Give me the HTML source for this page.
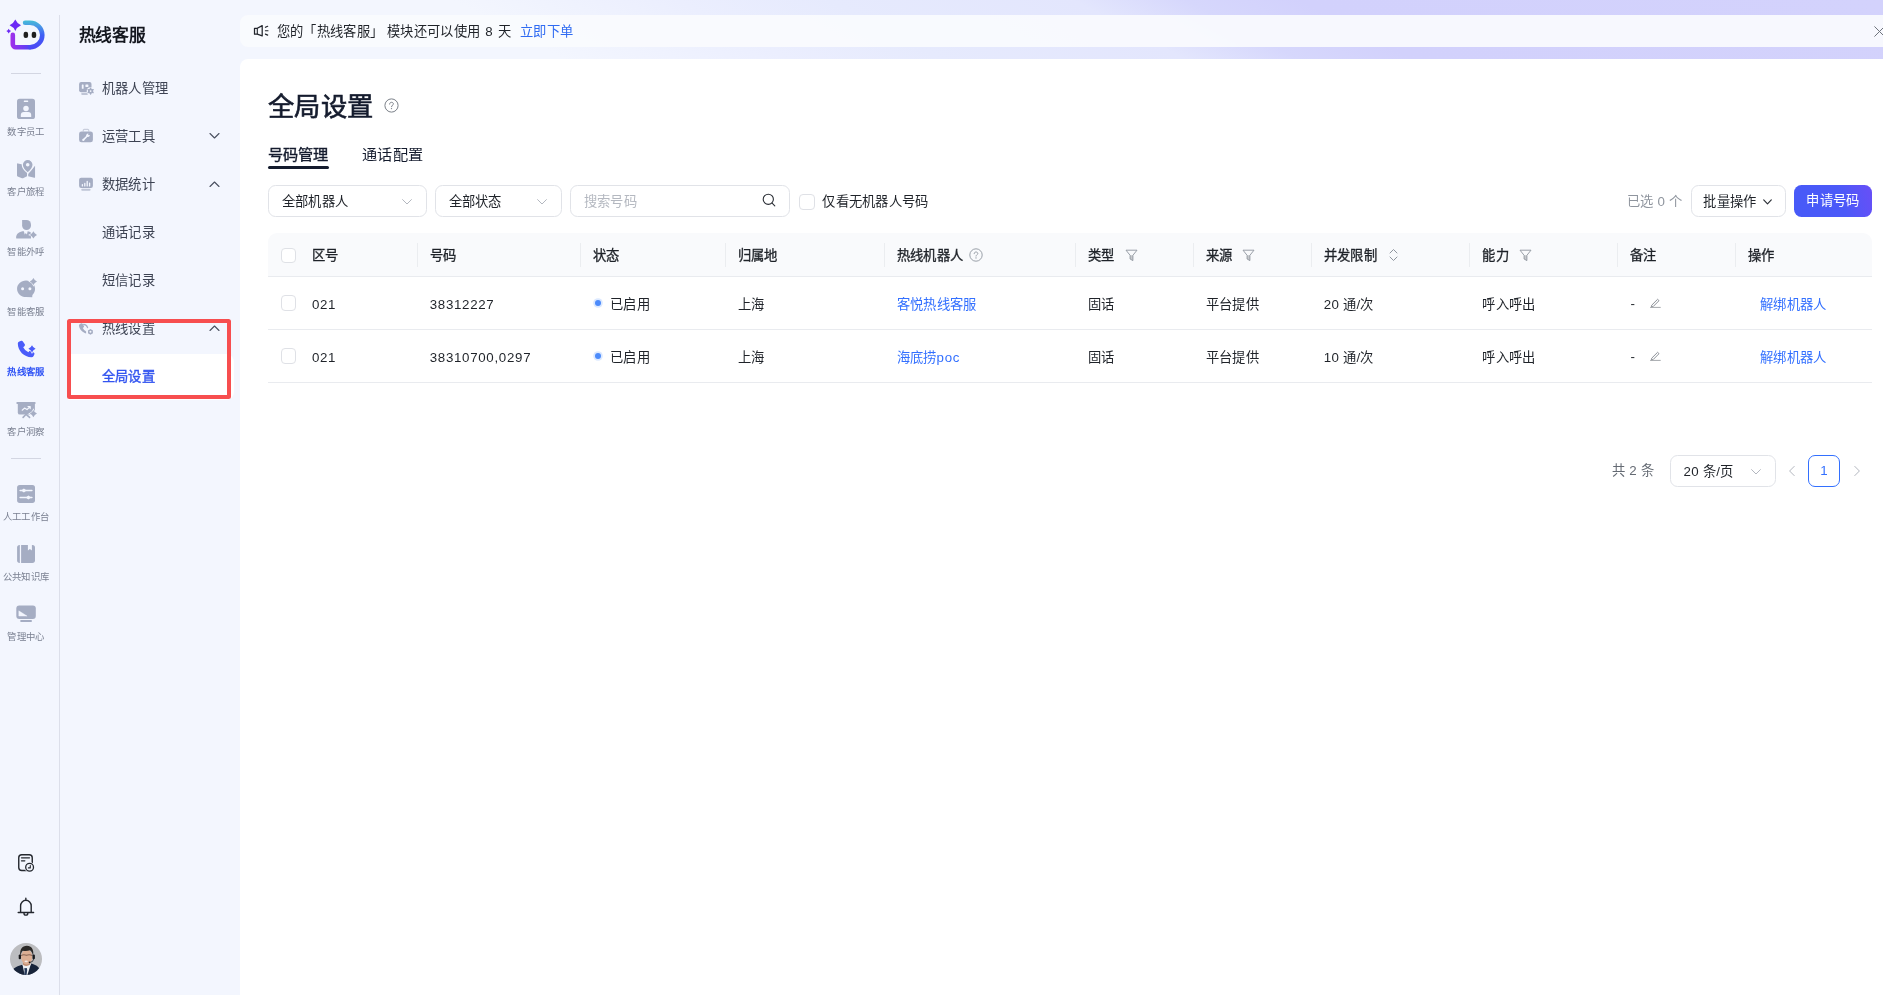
<!DOCTYPE html>
<html lang="zh-CN">
<head>
<meta charset="utf-8">
<title>全局设置</title>
<style>
*{box-sizing:border-box;margin:0;padding:0}
html,body{width:1883px;height:995px;overflow:hidden}
body{font-family:"Liberation Sans",sans-serif;font-size:13.3px;letter-spacing:0.3px;color:#1f2329;position:relative;
  background:linear-gradient(to top right,#f3f6fe 0%,#f3f6fe 62%,#ebeefe 68%,#e6eafd 72%,#e3e6fd 78.5%,#d6d7fc 81.5%,#d2d1fc 84.5%,#d3d2fc 100%);}
.abs{position:absolute}
#root{position:absolute;left:0;top:0;width:1883px;height:995px;overflow:hidden;will-change:transform}
/* left rail */
#rail{position:absolute;left:0;top:0;width:60px;height:995px;background:#f3f6fe}
#rail .vline{position:absolute;left:59px;top:15px;width:1px;height:980px;background:#dcdfea}
#rail .hr{position:absolute;left:11px;width:30px;height:1px;background:#d3d6e2}
.rl{position:absolute;left:-14px;width:80px;height:10px;font-size:9.35px;letter-spacing:0.37px;line-height:10px;color:#7a8091;text-align:center;white-space:nowrap}
.rl.on{color:#3054f5;font-weight:bold}
/* side menu */
#side{position:absolute;left:60px;top:0;width:180px;height:995px;background:#f3f6fe}
#side h1{position:absolute;left:18.5px;top:24px;font-size:16.8px;letter-spacing:-0.2px;line-height:24px;font-weight:bold;color:#14171f;white-space:nowrap}
.mi{position:absolute;left:8px;width:166px;height:45.6px;line-height:45.6px;font-size:13.3px;color:#3d4353;white-space:nowrap}
.mi .t{position:absolute;left:33.8px;top:0}
.mi svg.ch{position:absolute;left:141px;top:18.5px;width:11px;height:8px}
.mi.on{background:#fff;border-radius:0 8px 8px 0;color:#3355f0;-webkit-text-stroke:0.4px #3355f0}
#redbox{position:absolute;left:67px;top:319px;width:164.3px;height:80.2px;border:4px solid #f74e4f;border-radius:2.5px}
/* top banner */
#banner{position:absolute;left:240px;top:15px;width:1660px;height:32px;background:rgba(250,251,254,0.92);border-radius:8px 0 0 8px;font-size:13.3px;line-height:32px;color:#1f2329;white-space:nowrap}
#banner .txt{position:absolute;left:36.8px;top:1px}
#banner a{color:#2f6bf2;text-decoration:none;margin-left:9px}
/* card */
#card{position:absolute;left:240px;top:59px;width:1660px;height:940px;background:#fff;border-radius:8px 0 0 0}
#title{position:absolute;left:28px;top:29px;font-size:26.3px;letter-spacing:0.25px;line-height:38px;font-weight:normal;-webkit-text-stroke:0.65px #141b2d;color:#141b2d;white-space:nowrap}
.tab{position:absolute;top:84px;font-size:15.2px;letter-spacing:0.2px;line-height:24px;color:#141b2d;white-space:nowrap}
.tab.on{-webkit-text-stroke:0.4px #141b2d}
#tabline{position:absolute;left:28px;top:107.3px;width:61px;height:3px;border-radius:2px;background:#141b2d}
.sel{position:absolute;top:126px;height:32px;border:1px solid #e1e3e8;border-radius:7.5px;background:#fff;line-height:30px;font-size:13.3px;color:#1f2329;white-space:nowrap}
.sel .t{position:absolute;left:12.4px;top:1.3px}
.sel svg.cv{position:absolute;right:14px;top:13px;width:10px;height:6px}
.ph{color:#b4b8c0}
.cb{position:absolute;width:15.5px;height:15.5px;border:1px solid #dfe1e6;border-radius:4px;background:#fff}
/* table */
#thead{position:absolute;left:28px;top:174px;width:1603.6px;height:43.5px;background:#f9fafc;border-radius:9px 9px 0 0;border-bottom:1px solid #e9ebef}
.th{position:absolute;margin-left:-0.6px;top:1.5px;height:42px;line-height:42px;font-weight:normal;-webkit-text-stroke:0.32px #1f2329;font-size:13.3px;color:#1f2329;white-space:nowrap}
.sep{position:absolute;top:10px;width:1px;height:24px;background:#ebedf0}
.row{position:absolute;left:28px;width:1603.6px;height:53.2px;border-bottom:1px solid #e9ebef}
.td{position:absolute;margin-left:-0.6px;top:1.4px;height:53px;line-height:54px;font-size:13.3px;color:#1f2329;white-space:nowrap}
.num{letter-spacing:0.7px}
.lnk{color:#3370ff}
.dot{position:absolute;top:23.2px;width:6px;height:6px;border-radius:50%;background:#4c8bfb;box-shadow:0 0 0 1.8px #dce9ff}
</style>
</head>
<body>
<div id="root">
<div id="rail">
  <div class="vline"></div>
  <div class="hr" style="top:73px"></div>
  <div class="hr" style="top:458px"></div>
<svg class="abs" style="left:0;top:0;width:60px;height:995px" viewBox="0 0 60 995">
<defs><linearGradient id="lgA" gradientUnits="userSpaceOnUse" x1="0" y1="20" x2="0" y2="50"><stop offset="0" stop-color="#44c0d6"/><stop offset="0.22" stop-color="#4a96e6"/><stop offset="0.5" stop-color="#3f60f5"/><stop offset="1" stop-color="#4d44f5"/></linearGradient><linearGradient id="lgB" gradientUnits="userSpaceOnUse" x1="31" y1="0" x2="11" y2="0"><stop offset="0" stop-color="#4d44f5"/><stop offset="0.5" stop-color="#7838f1"/><stop offset="1" stop-color="#a030ea"/></linearGradient></defs>
<path d="M30 47.3 H15.8 A3 3 0 0 1 12.8 44.3 V34.9" fill="none" stroke="url(#lgB)" stroke-width="4.6" stroke-linecap="round"/>
<path d="M25.1 22.7 H30 A12.3 12.3 0 0 1 30 47.3" fill="none" stroke="url(#lgA)" stroke-width="4.6" stroke-linecap="round"/>
<rect x="23.6" y="31.8" width="4.5" height="6.3" rx="2.1" fill="#1f1f1f"/><rect x="31.7" y="31.8" width="4.5" height="6.3" rx="2.1" fill="#1f1f1f"/>
<path d="M15.30 19.60 Q17.01 23.59 21.00 25.30 Q17.01 27.01 15.30 31.00 Q13.59 27.01 9.60 25.30 Q13.59 23.59 15.30 19.60 Z" fill="#6b28f5"/><path d="M8.70 28.70 Q9.42 30.38 11.10 31.10 Q9.42 31.82 8.70 33.50 Q7.98 31.82 6.30 31.10 Q7.98 30.38 8.70 28.70 Z" fill="#6b28f5"/>
<rect x="17" y="98.8" width="18" height="20.2" rx="2.6" fill="#a5adc3"/><rect x="23.8" y="100.4" width="4.4" height="1.6" rx="0.5" fill="#f3f6fe"/><circle cx="26" cy="108.6" r="2.75" fill="#f3f6fe"/><path d="M20.8 117.1 V115 Q20.8 112.1 23.8 112.1 H28.2 Q31.2 112.1 31.2 115 V117.1 Z" fill="#f3f6fe"/>
<path d="M17 164.2 Q17 163.2 18 163.4 L22.5 164.6 L27 170 V176.2 L23 178.2 Q22.5 178.4 22 178.2 L17.6 176.4 Q17 176.1 17 175.5 Z" fill="#a5adc3"/><path d="M28.2 174 L35.05 165.8 V177.2 Q35.05 178 34.3 177.8 L28.2 176.3 Z" fill="#a5adc3"/><path d="M27.7 172.9 C24 170 22.3 167.6 22.3 164.8 A5.4 5.4 0 0 1 33.1 164.8 C33.1 167.6 31.4 170 27.7 172.9 Z" fill="#a5adc3" stroke="#f3f6fe" stroke-width="1.2"/><circle cx="27.7" cy="164.8" r="1.8" fill="#f3f6fe"/>
<path d="M22.1 220 H26.5 A4.5 4.5 0 0 1 31 224.5 V225.5 A4.45 4.45 0 0 1 22.1 225.5 Z" fill="#a5adc3"/><path d="M16.1 237.7 C16.1 233.4 19.6 231.2 23.9 231.2 L24.7 234.6 L25.8 233.1 L26.9 234.6 L27.7 231.3 C29.2 231.5 30.2 232 31 232.8 V238.6 H17 Q16.1 238.6 16.1 237.7 Z" fill="#a5adc3"/><path d="M33.40 231.30 Q34.48 233.82 37.00 234.90 Q34.48 235.98 33.40 238.50 Q32.32 235.98 29.80 234.90 Q32.32 233.82 33.40 231.30 Z" fill="#a5adc3" stroke="#f3f6fe" stroke-width="1.3" paint-order="stroke"/>
<path d="M26.05 280.5 C31 280.5 35.05 284.2 35.05 288.8 C35.05 291.5 33.9 293.6 32.4 295 L32.2 297.2 Q29.5 297.2 26.05 297.1 C21 297.1 17.05 293.4 17.05 288.8 C17.05 284.2 21 280.5 26.05 280.5 Z" fill="#a5adc3"/><circle cx="22.6" cy="288.8" r="1.5" fill="#f3f6fe"/><circle cx="29.9" cy="288.8" r="1.5" fill="#f3f6fe"/><path d="M33.40 277.90 Q34.48 280.42 37.00 281.50 Q34.48 282.58 33.40 285.10 Q32.32 282.58 29.80 281.50 Q32.32 280.42 33.40 277.90 Z" fill="#a5adc3" stroke="#f3f6fe" stroke-width="1.3" paint-order="stroke"/>
<path d="M19.3 341.4 L21.2 340.7 Q22.3 340.4 22.9 341.4 L24.8 344.2 Q25.3 345.1 24.6 345.9 L23.2 347.2 Q24.8 350.6 28.4 352.3 L29.4 351.1 Q30.2 350.4 31.1 350.9 L34 352.7 Q34.8 353.3 34.4 354.3 L33.6 356 Q33 357.3 31.4 357.3 C24 357.3 17.9 351 17.8 343.6 Q17.8 342 19.3 341.4 Z" fill="#4a5cfa"/><path d="M32.00 345.20 Q33.08 347.72 35.60 348.80 Q33.08 349.88 32.00 352.40 Q30.92 349.88 28.40 348.80 Q30.92 347.72 32.00 345.20 Z" fill="#4a5cfa" stroke="#f3f6fe" stroke-width="1.3" paint-order="stroke"/>
<rect x="16.3" y="401.9" width="19.4" height="2" rx="1" fill="#a5adc3"/><path d="M17.8 403.5 H34.9 V414.6 H20 Q17.8 414.6 17.8 412.4 Z" fill="#a5adc3"/><path d="M23.1 417.4 L26.1 414.3 L29.6 417.4" fill="none" stroke="#a5adc3" stroke-width="1.6" stroke-linecap="round" stroke-linejoin="round"/><path d="M22.2 410.2 L24.5 408.1 L27 409.6 L29.9 406.8 M28 406.5 H30.2 V408.6" fill="none" stroke="#f3f6fe" stroke-width="1.2" stroke-linecap="round" stroke-linejoin="round"/><path d="M33.40 410.00 Q34.48 412.52 37.00 413.60 Q34.48 414.68 33.40 417.20 Q32.32 414.68 29.80 413.60 Q32.32 412.52 33.40 410.00 Z" fill="#a5adc3" stroke="#f3f6fe" stroke-width="1.3" paint-order="stroke"/>
<rect x="17.1" y="484.9" width="17.9" height="18" rx="2.6" fill="#a5adc3"/><path d="M20.1 490.4 H31.9 M20.1 497.6 H31.9" stroke="#f3f6fe" stroke-width="1.5" stroke-linecap="round"/><path d="M21.2 490.4 L23.9 488.4 L26.6 490.4 L23.9 492.4 Z M25.7 497.6 L28.4 495.6 L31.1 497.6 L28.4 499.6 Z" fill="#f3f6fe"/>
<rect x="17.1" y="544.9" width="17.9" height="18" rx="2.6" fill="#a5adc3"/><rect x="19.85" y="544.5" width="1.25" height="19" fill="#f3f6fe"/><path d="M27.9 544.5 H31.9 V550.4 L29.9 549 L27.9 550.4 Z" fill="#f3f6fe"/>
<rect x="16.3" y="605.5" width="19.5" height="13.4" rx="3" fill="#a5adc3"/><path d="M18.8 610.8 V616.1 H27.1 Z" fill="#f3f6fe" stroke="#f3f6fe" stroke-width="0.4" stroke-linejoin="round"/><rect x="20.1" y="620.1" width="11.9" height="2" rx="1" fill="#a5adc3"/>
<rect x="18.75" y="854.7" width="13.5" height="15.8" rx="3" fill="none" stroke="#23272e" stroke-width="1.4"/><path d="M21.5 857.8 H29.5 M21.5 860.8 H24.8" stroke="#23272e" stroke-width="1.3" stroke-linecap="round"/><circle cx="29.6" cy="867.3" r="5.2" fill="#f3f6fe"/><circle cx="29.6" cy="867.3" r="3.9" fill="#f3f6fe" stroke="#23272e" stroke-width="1.3"/><path d="M30.3 865.6 V867.9 H28.4" fill="none" stroke="#23272e" stroke-width="1.1" stroke-linecap="round" stroke-linejoin="round"/>
<path d="M25.85 898.3 V900.3 M20.6 912.5 V905.8 A5.3 5.5 0 0 1 31.2 905.8 V912.5 M18.2 912.5 H33.6" fill="none" stroke="#23272e" stroke-width="1.4" stroke-linecap="round" stroke-linejoin="round"/><path d="M24 913.2 A1.9 1.9 0 0 0 27.8 913.2" fill="none" stroke="#23272e" stroke-width="1.4" stroke-linecap="round"/>
<defs><clipPath id="av"><circle cx="26" cy="959" r="16"/></clipPath></defs><g clip-path="url(#av)"><rect x="10" y="943" width="32" height="32" fill="#bcbdc0"/><path d="M10 970 V975 H42 V970 Z" fill="#c6c7c9"/><path d="M10.5 976 C11.2 969 15 967 22.3 964.8 L25.6 971 L31.5 963.6 C37 965.4 40.8 967.4 41.6 976 Z" fill="#18243a"/><path d="M22.5 964.6 L24.6 975 L27.4 975 L31 963.8 Z" fill="#eef0f3"/><path d="M24.2 968.2 L26.8 968 L27.2 970 L26.6 975 L24.2 975 L24.6 970.2 Z" fill="#273a5a"/><path d="M23 960 H30.2 V964.6 Q26.6 967.4 23 964.8 Z" fill="#c08e73"/><ellipse cx="26.7" cy="957" rx="5.6" ry="7.4" fill="#dcae93"/><path d="M21.2 955.5 Q23.6 954.2 26.4 955.3 Q29.4 954.2 32.2 955.5" fill="none" stroke="#8a6656" stroke-width="1.1"/><ellipse cx="26.2" cy="961.4" rx="1.7" ry="0.8" fill="#f3e9e6"/><path d="M20.4 956.5 C19.2 949.6 22.2 945.7 26.9 945.7 C31.6 945.7 34.2 949.4 33.1 956.5 C32.6 953.2 31.6 951.2 30 950.3 C27.6 951.3 24.4 951.2 22.8 950.7 C21.4 952 20.8 954 20.4 956.5 Z" fill="#2b2928"/><rect x="18.7" y="954.5" width="2.3" height="4.8" rx="1.1" fill="#17181b"/><rect x="32.5" y="954.5" width="2.4" height="4.8" rx="1.1" fill="#17181b"/><path d="M33.6 959 Q33.4 962 30.2 962.3" fill="none" stroke="#17181b" stroke-width="0.7"/><circle cx="29.6" cy="962.3" r="0.9" fill="#17181b"/></g>
</svg>
  <div class="rl" style="top:127px">数字员工</div>
  <div class="rl" style="top:187px">客户旅程</div>
  <div class="rl" style="top:247px">智能外呼</div>
  <div class="rl" style="top:307px">智能客服</div>
  <div class="rl on" style="top:367px">热线客服</div>
  <div class="rl" style="top:427px">客户洞察</div>
  <div class="rl" style="top:512px">人工工作台</div>
  <div class="rl" style="top:572px">公共知识库</div>
  <div class="rl" style="top:632px">管理中心</div>
</div>
<div id="side">
  <h1>热线客服</h1>
<svg class="abs" style="left:0;top:0;width:180px;height:400px" viewBox="60 0 180 400">
<rect x="79.1" y="82" width="12.4" height="10.3" rx="2" fill="#a5adc3"/><rect x="81.2" y="93" width="6.8" height="1.9" rx="0.8" fill="#bfc5d6"/><rect x="81.8" y="84.6" width="1.8" height="4.2" rx="0.4" fill="#f3f6fe"/><rect x="85.4" y="84.6" width="3" height="2.3" rx="0.4" fill="#f3f6fe"/><circle cx="90.6" cy="91.1" r="3.9" fill="#f3f6fe"/><circle cx="90.6" cy="91.1" r="2.1" fill="none" stroke="#a5adc3" stroke-width="1.2"/><path d="M90.6 88 V94.2 M87.9 89.55 L93.3 92.65 M87.9 92.65 L93.3 89.55" stroke="#a5adc3" stroke-width="1.1" stroke-linecap="round"/><circle cx="90.6" cy="91.1" r="2" fill="#a5adc3"/><circle cx="90.6" cy="91.1" r="0.9" fill="#f3f6fe"/>
<path d="M83.2 131.6 V130.4 Q83.2 129.4 84.2 129.4 H87.8 Q88.8 129.4 88.8 130.4 V131.6" fill="none" stroke="#c9cedd" stroke-width="1.1"/><rect x="79.1" y="131.4" width="13.8" height="10.9" rx="2.4" fill="#a5adc3"/><path d="M83.6 139.6 L87.2 136" stroke="#f3f6fe" stroke-width="1.5" stroke-linecap="round"/><circle cx="88" cy="135.3" r="1.7" fill="#f3f6fe"/><circle cx="89.1" cy="134.2" r="1" fill="#a5adc3"/><circle cx="83.3" cy="139.9" r="1.1" fill="#f3f6fe"/>
<rect x="79.1" y="177.8" width="13.8" height="10.2" rx="2" fill="#a5adc3"/><rect x="81.3" y="188.8" width="9.2" height="1.9" rx="0.8" fill="#bfc5d6"/><path d="M82.4 185.9 V184.6 M84.8 185.9 V183.4 M87.2 185.9 V181.3 M89.6 185.9 V183.2" stroke="#f3f6fe" stroke-width="1.3" stroke-linecap="round"/>
<path d="M79.9 323.9 L81.3 323.3 Q82.1 323.1 82.6 323.8 L83.9 325.9 Q84.3 326.6 83.7 327.2 L82.8 328 Q83.9 330.2 86.1 331.4 L86.1 333.6 C82.5 332.6 79.3 329.4 79 325.6 Q78.9 324.4 79.9 323.9 Z" fill="#a5adc3"/><path d="M83.6 324.4 Q86.6 324.6 87.6 327.6" fill="none" stroke="#a5adc3" stroke-width="1.2" stroke-linecap="round"/><path d="M90.45 328.95 L91.64 329.79 L92.96 330.40 L92.83 331.85 L92.96 333.30 L91.64 333.91 L90.45 334.75 L89.26 333.91 L87.94 333.30 L88.07 331.85 L87.94 330.40 L89.26 329.79 Z" fill="#a5adc3" stroke="#f3f6fe" stroke-width="1" paint-order="stroke"/><circle cx="90.45" cy="331.85" r="1" fill="#f3f6fe"/>
</svg>
  <div class="mi" style="top:65.7px"><span class="t">机器人管理</span></div>
  <div class="mi" style="top:113.7px"><span class="t">运营工具</span><svg class="ch" viewBox="0 0 11 8"><path d="M1 1.5 L5.5 6 L10 1.5" fill="none" stroke="#4a5060" stroke-width="1.1" stroke-linecap="round" stroke-linejoin="round"/></svg></div>
  <div class="mi" style="top:161.7px"><span class="t">数据统计</span><svg class="ch" viewBox="0 0 11 8"><path d="M1 6.5 L5.5 2 L10 6.5" fill="none" stroke="#4a5060" stroke-width="1.1" stroke-linecap="round" stroke-linejoin="round"/></svg></div>
  <div class="mi" style="top:209.7px"><span class="t">通话记录</span></div>
  <div class="mi" style="top:257.7px"><span class="t">短信记录</span></div>
  <div class="mi" style="top:305.7px"><span class="t">热线设置</span><svg class="ch" viewBox="0 0 11 8"><path d="M1 6.5 L5.5 2 L10 6.5" fill="none" stroke="#4a5060" stroke-width="1.1" stroke-linecap="round" stroke-linejoin="round"/></svg></div>
  <div class="mi on" style="top:354px"><span class="t">全局设置</span></div>
</div>
<div id="redbox"></div>
<div id="banner"><svg class="abs" style="left:13.2px;top:9px;width:16px;height:14px" viewBox="0 0 16 14"><path d="M1.5 4.3 H4.3 L9.2 1.6 V11.9 L4.3 10.2 H1.5 Z" fill="none" stroke="#20242b" stroke-width="1.25" stroke-linejoin="round"/><path d="M4.3 4.3 V10.2" stroke="#20242b" stroke-width="1.1"/><path d="M12.4 3.3 L14.7 2.3 M12.4 6.7 H15 M12.4 10.1 L14.7 11.1" stroke="#20242b" stroke-width="1.15" stroke-linecap="round"/></svg><svg class="abs" style="left:1633.5px;top:10.5px;width:11px;height:11px" viewBox="0 0 11 11"><path d="M0.7 0.7 L10.3 10.3 M10.3 0.7 L0.7 10.3" stroke="#6f747c" stroke-width="1" stroke-linecap="round"/></svg><span class="txt">您的「热线客服」 模块还可以使用 <span style="padding:0 0.9px">8</span> 天<a>立即下单</a></span></div>
<div id="card">
  <div id="title">全局设置</div>
  <svg class="abs" style="left:144.2px;top:39.2px;width:15px;height:15px" viewBox="0 0 15 15"><circle cx="7.5" cy="7.5" r="6.6" fill="none" stroke="#7b8089" stroke-width="1"/><path d="M5.6 6.1 C5.6 4.9 6.5 4.3 7.5 4.3 C8.6 4.3 9.4 5 9.4 5.9 C9.4 7.2 7.5 7.3 7.5 8.7" fill="none" stroke="#7b8089" stroke-width="1" stroke-linecap="round"/><circle cx="7.5" cy="10.6" r="0.7" fill="#7b8089"/></svg>
  <div class="tab on" style="left:27.8px">号码管理</div>
  <div class="tab" style="left:122.3px">通话配置</div>
  <div id="tabline"></div>
  <div class="sel" style="left:28.3px;width:159.2px"><span class="t">全部机器人</span><svg class="cv" viewBox="0 0 10 6"><path d="M0.6 0.6 L5 5 L9.4 0.6" fill="none" stroke="#b3b7bf" stroke-width="1" stroke-linecap="round" stroke-linejoin="round"/></svg></div>
  <div class="sel" style="left:195.2px;width:126.6px"><span class="t">全部状态</span><svg class="cv" viewBox="0 0 10 6"><path d="M0.6 0.6 L5 5 L9.4 0.6" fill="none" stroke="#b3b7bf" stroke-width="1" stroke-linecap="round" stroke-linejoin="round"/></svg></div>
  <div class="sel" style="left:330.3px;width:220px"><span class="t ph">搜索号码</span><svg class="abs" style="right:13.5px;top:7.3px;width:14px;height:14px" viewBox="0 0 14 14"><circle cx="6.3" cy="6.3" r="5.1" fill="none" stroke="#2b2f36" stroke-width="1.1"/><path d="M10.1 10.1 L12.8 12.8" stroke="#2b2f36" stroke-width="1.1" stroke-linecap="round"/></svg></div>
  <div class="cb" style="left:558.5px;top:134.5px;width:16px;height:16px"></div>
  <div class="abs" style="left:582.3px;top:127.3px;line-height:32px;white-space:nowrap">仅看无机器人号码</div>
  <div class="abs" style="left:1387px;top:127.3px;line-height:32px;white-space:nowrap;color:#8f959e">已选 0 个</div>
  <div class="sel" style="left:1450.8px;width:94.8px"><span class="t" style="left:11.5px">批量操作</span><svg class="abs" style="left:71.3px;top:12.6px;width:9px;height:6px" viewBox="0 0 9 6"><path d="M0.7 0.8 L4.5 4.8 L8.3 0.8" fill="none" stroke="#2b2f36" stroke-width="1.15" stroke-linecap="round" stroke-linejoin="round"/></svg></div>
  <div class="abs" id="applybtn" style="left:1554px;top:126px;width:78px;height:32px;border-radius:7.5px;background:linear-gradient(75deg,#475af8 0%,#4b59f8 60%,#684ff7 100%);color:#fff;line-height:32px;text-align:center;white-space:nowrap">申请号码</div>
  <div id="thead">
    <div class="cb" style="left:12.6px;top:14.5px"></div>
    <div class="th" style="left:44.5px">区号</div>
    <div class="th" style="left:162.5px">号码</div>
    <div class="th" style="left:325.5px">状态</div>
    <div class="th" style="left:470.3px">归属地</div>
    <div class="th" style="left:629.3px">热线机器人</div>
    <div class="th" style="left:820.3px">类型</div>
    <div class="th" style="left:938.3px">来源</div>
    <div class="th" style="left:1056.3px">并发限制</div>
    <div class="th" style="left:1214.8px">能力</div>
    <div class="th" style="left:1362.5px">备注</div>
    <div class="th" style="left:1480.5px">操作</div>
    <div class="sep" style="left:149px"></div>
    <div class="sep" style="left:312px"></div>
    <div class="sep" style="left:457px"></div>
    <div class="sep" style="left:616px"></div>
    <div class="sep" style="left:807px"></div>
    <div class="sep" style="left:925px"></div>
    <div class="sep" style="left:1043px"></div>
    <div class="sep" style="left:1201px"></div>
    <div class="sep" style="left:1349px"></div>
    <div class="sep" style="left:1467px"></div>
    <svg class="abs" style="left:857.2px;top:15.7px;width:13px;height:13px" viewBox="0 0 13 13"><path d="M5.1 6.3 H7.9 V11.6 L5.1 10 Z" fill="#c6c8cc"/><path d="M1 1.2 H12 L7.9 6.3 V11.6 L5.1 10 V6.3 Z" fill="none" stroke="#8f959e" stroke-width="0.9" stroke-linejoin="round"/></svg>
    <svg class="abs" style="left:974.2px;top:15.7px;width:13px;height:13px" viewBox="0 0 13 13"><path d="M5.1 6.3 H7.9 V11.6 L5.1 10 Z" fill="#c6c8cc"/><path d="M1 1.2 H12 L7.9 6.3 V11.6 L5.1 10 V6.3 Z" fill="none" stroke="#8f959e" stroke-width="0.9" stroke-linejoin="round"/></svg>
    <svg class="abs" style="left:1251px;top:15.7px;width:13px;height:13px" viewBox="0 0 13 13"><path d="M5.1 6.3 H7.9 V11.6 L5.1 10 Z" fill="#c6c8cc"/><path d="M1 1.2 H12 L7.9 6.3 V11.6 L5.1 10 V6.3 Z" fill="none" stroke="#8f959e" stroke-width="0.9" stroke-linejoin="round"/></svg>
    <svg class="abs" style="left:1121.3px;top:15.3px;width:9px;height:14px" viewBox="0 0 9 14"><path d="M1 5 L4.5 1.5 L8 5 M1 9 L4.5 12.5 L8 9" fill="none" stroke="#8f959e" stroke-width="1" stroke-linecap="round" stroke-linejoin="round"/></svg>
    <svg class="abs" style="left:701.3px;top:15.4px;width:14px;height:14px" viewBox="0 0 14 14"><circle cx="7" cy="7" r="6.2" fill="none" stroke="#8f959e" stroke-width="0.9"/><path d="M5.2 5.7 C5.2 4.6 6 4 7 4 C8 4 8.8 4.6 8.8 5.5 C8.8 6.7 7 6.8 7 8.1" fill="none" stroke="#8f959e" stroke-width="0.9" stroke-linecap="round"/><circle cx="7" cy="9.9" r="0.65" fill="#8f959e"/></svg>
  </div>
  <div class="row" style="top:218px">
    <div class="cb" style="left:12.6px;top:18.3px"></div>
    <div class="td num" style="left:44.5px">021</div>
    <div class="td num" style="left:162.3px">38312227</div>
    <div class="dot" style="left:327.4px"></div><div class="td" style="left:342.7px">已启用</div>
    <div class="td" style="left:470.3px">上海</div>
    <div class="td lnk" style="left:629.3px">客悦热线客服</div>
    <div class="td" style="left:820.3px">固话</div>
    <div class="td" style="left:938.3px">平台提供</div>
    <div class="td" style="left:1056.3px">20 通/次</div>
    <div class="td" style="left:1214.8px">呼入呼出</div>
    <div class="td" style="left:1363px;top:0.4px">-</div><svg class="abs" style="left:1381.6px;top:20.3px;width:11px;height:11px" viewBox="0 0 11 11"><path d="M1.7 8.2 L7.6 2.3 L9 3.7 L3.1 9.6 L1.4 9.9 Z" fill="none" stroke="#868a91" stroke-width="0.95" stroke-linejoin="round"/><path d="M0.5 10.4 H10.3" stroke="#9a9da3" stroke-width="0.9" stroke-linecap="round"/></svg>
    <div class="td lnk" style="left:1492.5px">解绑机器人</div>
  </div>
  <div class="row" style="top:271px">
    <div class="cb" style="left:12.6px;top:18.3px"></div>
    <div class="td num" style="left:44.5px">021</div>
    <div class="td num" style="left:162.3px">38310700,0297</div>
    <div class="dot" style="left:327.4px"></div><div class="td" style="left:342.7px">已启用</div>
    <div class="td" style="left:470.3px">上海</div>
    <div class="td lnk" style="left:629.3px">海底捞<span class="num">poc</span></div>
    <div class="td" style="left:820.3px">固话</div>
    <div class="td" style="left:938.3px">平台提供</div>
    <div class="td" style="left:1056.3px">10 通/次</div>
    <div class="td" style="left:1214.8px">呼入呼出</div>
    <div class="td" style="left:1363px;top:0.4px">-</div><svg class="abs" style="left:1381.6px;top:20.3px;width:11px;height:11px" viewBox="0 0 11 11"><path d="M1.7 8.2 L7.6 2.3 L9 3.7 L3.1 9.6 L1.4 9.9 Z" fill="none" stroke="#868a91" stroke-width="0.95" stroke-linejoin="round"/><path d="M0.5 10.4 H10.3" stroke="#9a9da3" stroke-width="0.9" stroke-linecap="round"/></svg>
    <div class="td lnk" style="left:1492.5px">解绑机器人</div>
  </div>
  <div class="abs" style="left:1372px;top:396px;line-height:32px;white-space:nowrap;color:#646a73">共 2 条</div>
  <div class="sel" style="left:1430px;top:396px;width:105.7px"><span class="t" style="left:12.5px">20 条/页</span><svg class="cv" viewBox="0 0 10 6"><path d="M0.6 0.6 L5 5 L9.4 0.6" fill="none" stroke="#b3b7bf" stroke-width="1" stroke-linecap="round" stroke-linejoin="round"/></svg></div>
  <svg class="abs" style="left:1547.5px;top:406px;width:8px;height:12px" viewBox="0 0 8 12"><path d="M6.2 1.4 L1.6 6 L6.2 10.6" fill="none" stroke="#b3b7bf" stroke-width="1" stroke-linecap="round" stroke-linejoin="round"/></svg>
  <div class="abs" style="left:1568px;top:396px;width:32px;height:32px;border:1px solid #3370ff;border-radius:7px;color:#3370ff;line-height:30px;text-align:center">1</div>
  <svg class="abs" style="left:1612.5px;top:406px;width:8px;height:12px" viewBox="0 0 8 12"><path d="M1.8 1.4 L6.4 6 L1.8 10.6" fill="none" stroke="#b3b7bf" stroke-width="1" stroke-linecap="round" stroke-linejoin="round"/></svg>
</div>
</div>
</body>
</html>
